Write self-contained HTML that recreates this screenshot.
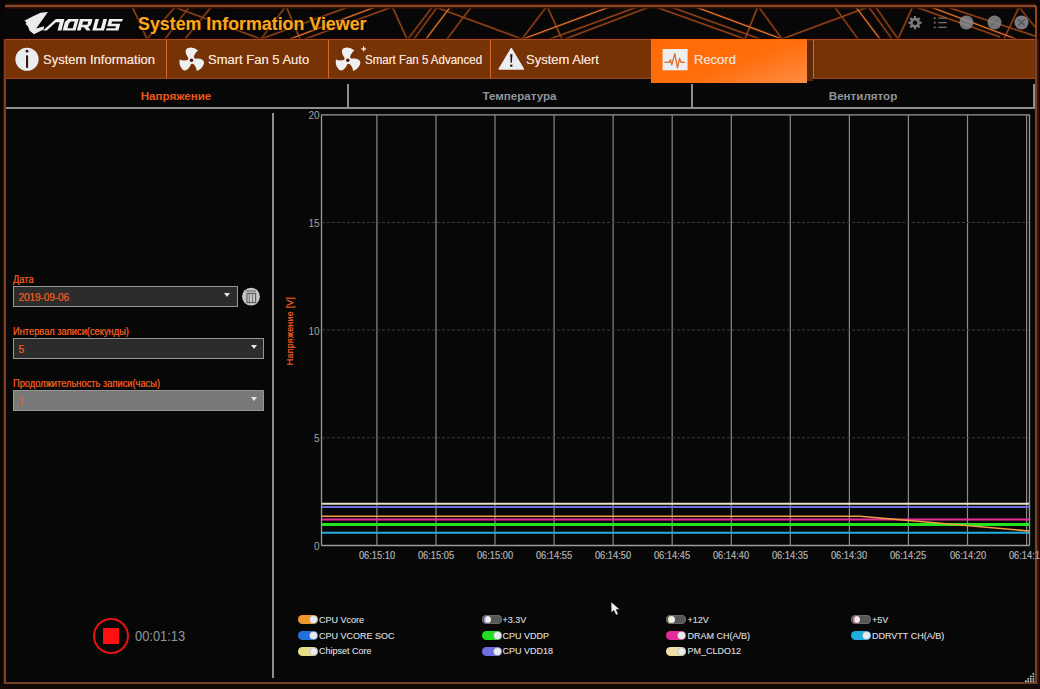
<!DOCTYPE html>
<html><head><meta charset="utf-8">
<style>
*{margin:0;padding:0;box-sizing:border-box}
html,body{width:1040px;height:689px;overflow:hidden;background:#070707;font-family:"Liberation Sans",sans-serif}
.a{position:absolute}
#frame{left:4px;top:5px;width:1034px;height:679px;border:2px solid #b8541e;}
.tab{position:absolute;top:40px;height:39px;color:#f1dccb;text-shadow:0 0 0.5px #f1dccb;font-size:13px;line-height:39px;white-space:nowrap}
.sep{position:absolute;top:40px;width:1px;height:38px;background:#d06a30}
.sub{position:absolute;top:84px;height:24px;line-height:24px;font-size:11.6px;font-weight:bold;text-align:center;color:#8f959a}
.lbl{position:absolute;left:13px;font-size:10px;color:#e4561c;white-space:nowrap;transform:scaleX(0.93);transform-origin:left;text-shadow:0 0 0.4px #e4561c}
.dd{position:absolute;left:13px;height:20.5px;border:1.8px solid #969696;background:#2c2c2c;color:#e4561c;font-size:10.2px;line-height:21px;padding-left:4.5px;letter-spacing:-0.15px;text-shadow:0 0 0.4px #e4561c}
.arr{position:absolute;top:6px;width:0;height:0;border-left:3px solid transparent;border-right:3px solid transparent;border-top:4px solid #e6e6e6}
.yl{position:absolute;font-size:10px;color:#a4a4a4;text-align:right;width:20px;margin-top:2px;margin-left:1.5px}
.xl{position:absolute;top:550px;text-shadow:0 0 0.5px #909090;font-size:10px;line-height:12px;color:#a0a0a0;width:60px;text-align:center;margin-left:-30px;transform:scaleX(0.93)}
.leg{position:absolute;font-size:9px;color:#c2c6ca;text-shadow:0 0 0.6px #a0a4a8;white-space:nowrap;line-height:12px;transform:scaleX(1.0);transform-origin:left}
.pill{position:absolute;width:20.2px;height:9.2px;border-radius:4.6px}
.knob{position:absolute;width:7px;height:7px;border-radius:50%;background:#e8eaee;top:1.1px;box-shadow:0 0 0 0.6px #b0b0b0}
</style></head>
<body>
<!-- outer dark surround -->
<div class="a" style="left:0;top:0;width:1040px;height:689px;background:#080605"></div>
<div class="a" style="left:5px;top:6px;width:1031px;height:677px;background:#070707"></div>

<!-- header lines -->
<svg class="a" style="left:0;top:0" width="1040" height="45" viewBox="0 0 1040 45">
 <g stroke="#8a3008" stroke-width="2.8" fill="none" opacity="0.4"><line x1="132" y1="6" x2="147" y2="39"/><line x1="176" y1="6" x2="147" y2="39"/><line x1="190" y1="6" x2="165" y2="39"/><line x1="212" y1="6" x2="185" y2="39"/><line x1="177" y1="8" x2="250" y2="35"/><line x1="250" y1="35" x2="261" y2="39"/><line x1="286" y1="6" x2="261" y2="39"/><line x1="286" y1="6" x2="300" y2="39"/><line x1="261" y1="39" x2="351" y2="6"/><line x1="290" y1="39" x2="378" y2="6"/><line x1="305" y1="39" x2="392" y2="7"/><line x1="392" y1="6" x2="407" y2="39"/><line x1="433" y1="6" x2="408" y2="39"/><line x1="438" y1="6" x2="414" y2="39"/><line x1="451" y1="6" x2="426" y2="39"/><line x1="472" y1="6" x2="447" y2="39"/><line x1="438" y1="8" x2="522" y2="39"/><line x1="547" y1="6" x2="522" y2="39"/><line x1="547" y1="6" x2="562" y2="39"/><line x1="523" y1="39" x2="612" y2="6"/><line x1="550" y1="39" x2="640" y2="6"/><line x1="565" y1="39" x2="652" y2="6"/><line x1="653" y1="6" x2="745" y2="39"/><line x1="668" y1="6" x2="760" y2="39"/><line x1="693" y1="6" x2="782" y2="39"/><line x1="758" y1="6" x2="745" y2="39"/><line x1="758" y1="6" x2="782" y2="39"/><line x1="782" y1="39" x2="868" y2="7"/><line x1="834" y1="6" x2="858" y2="39"/><line x1="855" y1="6" x2="880" y2="39"/><line x1="868" y1="6" x2="892" y2="39"/><line x1="875" y1="6" x2="898" y2="39"/><line x1="913" y1="6" x2="898" y2="39"/><line x1="913" y1="6" x2="1000" y2="37"/><line x1="928" y1="6" x2="1016" y2="39"/><line x1="950" y1="8" x2="1035" y2="36"/><line x1="1019" y1="7" x2="1004" y2="39"/><line x1="1019" y1="7" x2="1035" y2="27"/></g>
 <g stroke="#c8642a" stroke-width="1" fill="none" opacity="0.75"><line x1="132" y1="6" x2="147" y2="39"/><line x1="176" y1="6" x2="147" y2="39"/><line x1="190" y1="6" x2="165" y2="39"/><line x1="212" y1="6" x2="185" y2="39"/><line x1="177" y1="8" x2="250" y2="35"/><line x1="250" y1="35" x2="261" y2="39"/><line x1="286" y1="6" x2="261" y2="39"/><line x1="286" y1="6" x2="300" y2="39"/><line x1="261" y1="39" x2="351" y2="6"/><line x1="305" y1="39" x2="392" y2="7"/><line x1="392" y1="6" x2="407" y2="39"/><line x1="433" y1="6" x2="408" y2="39"/><line x1="438" y1="6" x2="414" y2="39"/><line x1="472" y1="6" x2="447" y2="39"/><line x1="438" y1="8" x2="522" y2="39"/><line x1="547" y1="6" x2="522" y2="39"/><line x1="547" y1="6" x2="562" y2="39"/><line x1="550" y1="39" x2="640" y2="6"/><line x1="565" y1="39" x2="652" y2="6"/><line x1="653" y1="6" x2="745" y2="39"/><line x1="668" y1="6" x2="760" y2="39"/><line x1="758" y1="6" x2="745" y2="39"/><line x1="758" y1="6" x2="782" y2="39"/><line x1="782" y1="39" x2="868" y2="7"/><line x1="834" y1="6" x2="858" y2="39"/><line x1="868" y1="6" x2="892" y2="39"/><line x1="875" y1="6" x2="898" y2="39"/><line x1="913" y1="6" x2="898" y2="39"/><line x1="913" y1="6" x2="1000" y2="37"/><line x1="950" y1="8" x2="1035" y2="36"/><line x1="1019" y1="7" x2="1004" y2="39"/><line x1="1019" y1="7" x2="1035" y2="27"/></g>
 <g stroke="#f08038" stroke-width="1.2" fill="none" opacity="0.95"><line x1="290" y1="39" x2="378" y2="6"/><line x1="451" y1="6" x2="426" y2="39"/><line x1="523" y1="39" x2="612" y2="6"/><line x1="693" y1="6" x2="782" y2="39"/><line x1="855" y1="6" x2="880" y2="39"/><line x1="928" y1="6" x2="1016" y2="39"/></g>
 <line x1="5" y1="6" x2="1036" y2="6" stroke="#3a1204" stroke-width="5"/><line x1="5" y1="6" x2="1036" y2="6" stroke="#84482a" stroke-width="2"/>
 <line x1="1036" y1="6" x2="1036" y2="39" stroke="#c8591d" stroke-width="1.5"/>
</svg>
<!-- logo black background -->
<div class="a" style="left:6px;top:8.5px;width:124px;height:30px;background:#070707"></div>

<!-- AORUS logo -->
<svg class="a" style="left:0;top:0" width="130" height="40" viewBox="0 0 130 40">
 <path d="M47.9,12.1 L40.5,12.7 L31.5,17 L24.3,20.7 L26.4,22.2 L25.6,24 L28.2,26.8 L29.4,30.4 L33.9,34.3 L43.6,29.6 L44.2,26.3 L36.2,28.4 Z" fill="#ececec"/>
 <g fill="#f0f0f0" fill-rule="evenodd" transform="translate(0,30.6) skewX(-15) translate(0,-30.6)">
  <path d="M43,30.6 L46.8,30.6 L53.6,22.2 L57.5,22.2 L57.5,30.6 L61.4,30.6 L61.4,19.1 L52.8,19.1 Z"/>
  <path d="M62.6,30.6 L75.6,30.6 L75.6,19.1 L65.2,19.1 L62.6,22 Z M66.9,28.3 L72.2,28.3 L72.2,21.5 L68.4,21.5 L66.9,23.2 Z"/>
  <path d="M76.9,30.6 L80.6,30.6 L80.6,27.2 L83,27.2 L86.6,30.6 L90.6,30.6 L87.2,27 Q89.4,26.2 89.4,24 L89.4,19.1 L76.9,19.1 Z M80.6,21.5 L85.8,21.5 L85.8,24.8 L80.6,24.8 Z"/>
  <path d="M92.3,19.1 L92.3,30.6 L104,30.6 L104,19.1 L100.3,19.1 L100.3,28.3 L95.9,28.3 L95.9,19.1 Z"/>
  <path d="M106,19.1 L120,19.1 L119.4,21.5 L109.6,21.5 L109.6,23.8 L118.4,23.8 L118.4,30.6 L105.8,30.6 L106.2,28.3 L114.8,28.3 L114.8,26.2 L106,26.2 Z"/>
 </g>
</svg>
<!-- title -->
<div class="a" style="left:138px;top:14px;font-size:18.3px;line-height:20px;font-weight:bold;color:#f7a81a;white-space:nowrap;transform:scaleX(0.975);transform-origin:left;text-shadow:0 0 1px #6a2000,0 0 2px #000,0 0 3px #000">System Information Viewer</div>

<!-- header icons -->
<svg class="a" style="left:900px;top:8px" width="135" height="30" viewBox="900 8 135 30">
 <g fill="#7c7c7c">
  <circle cx="915" cy="22.7" r="4.9"/>
  <g stroke="#7c7c7c" stroke-width="2.2">
   <line x1="915" y1="16" x2="915" y2="29.4"/>
   <line x1="908.3" y1="22.7" x2="921.7" y2="22.7"/>
   <line x1="910.3" y1="18" x2="919.7" y2="27.4"/>
   <line x1="919.7" y1="18" x2="910.3" y2="27.4"/>
  </g>
  <circle cx="915" cy="22.7" r="2.3" fill="#070707"/>
 </g>
 <g fill="#6e6e6e">
  <rect x="933.8" y="17.3" width="1.8" height="1.8"/>
  <rect x="933.8" y="21.8" width="1.8" height="1.8"/>
  <rect x="933.8" y="26.5" width="1.8" height="1.8"/>
  <rect x="938.3" y="17.5" width="8.4" height="1.3"/>
  <rect x="938.3" y="22" width="8.4" height="1.3"/>
  <rect x="938.3" y="26.7" width="8.4" height="1.3"/>
 </g>
 <circle cx="966.4" cy="22.5" r="7" fill="#8e9196" fill-opacity="0.8"/>
 <circle cx="994.5" cy="22.5" r="7" fill="#8e9196" fill-opacity="0.8"/>
 <line x1="990.5" y1="26.5" x2="998.5" y2="18.5" stroke="#5a6a60" stroke-width="1"/>
 <circle cx="1021.5" cy="22.5" r="7" fill="#8e9196" fill-opacity="0.85"/>
 <g stroke="#4a4d50" stroke-width="1.2"><line x1="1018.3" y1="19.3" x2="1024.7" y2="25.7"/><line x1="1024.7" y1="19.3" x2="1018.3" y2="25.7"/></g>
</svg>
<!-- tab bar -->
<div class="a" style="left:5px;top:39px;width:1031px;height:40px;background:#773206;border-top:1.5px solid #a84c22;border-bottom:1.5px solid #9c4420;box-shadow:0 -1.5px 1.5px #2a0600"></div>
<div class="sep" style="left:166px"></div>
<div class="sep" style="left:328px"></div>
<div class="sep" style="left:490px"></div>
<div class="sep" style="left:813px"></div>

<!-- tab icons -->
<svg class="a" style="left:0;top:39px" width="660" height="40" viewBox="0 39 660 40">
 <circle cx="27" cy="59.25" r="11.6" fill="#eaeef2"/>
 <circle cx="27" cy="51.2" r="1.4" fill="#3a1408"/>
 <rect x="26" y="55.3" width="2.1" height="12.8" rx="0.8" fill="#3a1408"/>
 <g transform="translate(191.5,60.3)" fill="#eef0f2">
  <path d="M2.2,-2.8 Q2.8,-7 6.6,-9.9 Q2,-13.8 -3.5,-12.4 Q-6.8,-11 -5.6,-6.8 Q-4.6,-3.8 -2.6,-1.6 Z"/><g transform="rotate(120)"><path d="M2.2,-2.8 Q2.8,-7 6.6,-9.9 Q2,-13.8 -3.5,-12.4 Q-6.8,-11 -5.6,-6.8 Q-4.6,-3.8 -2.6,-1.6 Z"/></g><g transform="rotate(240)"><path d="M2.2,-2.8 Q2.8,-7 6.6,-9.9 Q2,-13.8 -3.5,-12.4 Q-6.8,-11 -5.6,-6.8 Q-4.6,-3.8 -2.6,-1.6 Z"/></g>
  <circle r="3.6"/><circle r="1.7" fill="#4a1606"/>
 </g><g transform="translate(347.8,60.3)" fill="#eef0f2">
  <path d="M2.2,-2.8 Q2.8,-7 6.6,-9.9 Q2,-13.8 -3.5,-12.4 Q-6.8,-11 -5.6,-6.8 Q-4.6,-3.8 -2.6,-1.6 Z"/><g transform="rotate(120)"><path d="M2.2,-2.8 Q2.8,-7 6.6,-9.9 Q2,-13.8 -3.5,-12.4 Q-6.8,-11 -5.6,-6.8 Q-4.6,-3.8 -2.6,-1.6 Z"/></g><g transform="rotate(240)"><path d="M2.2,-2.8 Q2.8,-7 6.6,-9.9 Q2,-13.8 -3.5,-12.4 Q-6.8,-11 -5.6,-6.8 Q-4.6,-3.8 -2.6,-1.6 Z"/></g>
  <circle r="3.6"/><circle r="1.7" fill="#4a1606"/>
 </g>
 <g fill="#f2f2f2"><rect x="363" y="46.5" width="1.3" height="4.8"/><rect x="361.3" y="48.3" width="4.8" height="1.3"/></g>
 <path d="M511.3 48.6 L523.5 69 L499.1 69 Z" fill="#eaeef2" stroke="#eaeef2" stroke-width="1.4" stroke-linejoin="round"/>
 <path d="M510.2 54.2 L512.4 54.2 L511.9 62.7 L510.7 62.7 Z" fill="#2a0e06"/>
 <rect x="510.2" y="64.6" width="2.2" height="2.1" fill="#2a0e06"/>
</svg>
<div class="tab" style="left:43px">System Information</div>
<div class="tab" style="left:208px">Smart Fan 5 Auto</div>
<div class="tab" style="left:365px;transform:scaleX(0.885);transform-origin:left">Smart Fan 5 Advanced</div>
<div class="tab" style="left:526px">System Alert</div>

<!-- active Record tab -->
<div class="a" style="left:806px;top:41px;width:7px;height:40px;background:#5e2a0c"></div>
<div class="a" style="left:651px;top:39px;width:156px;height:44px;background:linear-gradient(160deg,#ff6a08 0%,#ff6e0c 55%,#ff8c45 100%)"></div>
<svg class="a" style="left:662px;top:49px" width="27" height="22" viewBox="0 0 27 22">
 <rect x="0.6" y="0" width="25" height="21.3" fill="#eceef0"/>
 <path d="M2.3 13.3 L7 13.3 L8.5 10.8 L9.8 15.8 L12.8 4.6 L15.5 18.9 L17.5 9.5 L19 13.3 L22.9 13.3" stroke="#e2682a" stroke-width="1.3" fill="none" stroke-linejoin="round"/>
</svg>
<div class="tab" style="left:694px">Record</div>

<!-- subtabs -->
<div class="a" style="left:5px;top:107px;width:1030px;height:1.5px;background:#8e8e8e"></div>
<div class="a" style="left:347px;top:84px;width:1.5px;height:24px;background:#8e8e8e"></div>
<div class="a" style="left:691px;top:84px;width:1.5px;height:24px;background:#8e8e8e"></div>
<div class="a" style="left:1033px;top:84px;width:1.5px;height:24px;background:#8e8e8e"></div>
<div class="sub" style="left:5px;width:342px;color:#e8571b">Напряжение</div>
<div class="sub" style="left:348px;width:343px">Температура</div>
<div class="sub" style="left:692px;width:342px">Вентилятор</div>

<!-- left panel divider -->
<div class="a" style="left:272px;top:113px;width:1.5px;height:565px;background:#8e8e8e"></div>


<!-- frame borders -->
<div class="a" style="left:2.5px;top:39px;width:1.5px;height:645px;background:#3a1206"></div><div class="a" style="left:4px;top:39px;width:2px;height:645px;background:#7e3e22"></div>
<div class="a" style="left:1035px;top:39px;width:1.6px;height:645px;background:#6e4630"></div><div class="a" style="left:1036.6px;top:39px;width:2px;height:645px;background:#3e1206"></div>
<div class="a" style="left:0;top:684px;width:1040px;height:5px;background:#120a04"></div><div class="a" style="left:4px;top:682px;width:1033px;height:2.3px;background:#704228"></div>

<!-- left panel controls -->
<div class="lbl" style="top:274px">Дата</div>
<div class="dd" style="top:286px;width:225px">2019-09-06<div class="arr" style="left:210px"></div></div>
<svg class="a" style="left:241px;top:286px" width="21" height="21" viewBox="241 286 21 21">
 <circle cx="251" cy="296.6" r="8.9" fill="#c6c6c6"/>
 <rect x="245.8" y="290.3" width="10.2" height="1.3" fill="#7a7a7a"/>
 <rect x="246.9" y="293.4" width="8.7" height="9.2" fill="none" stroke="#5a5a5a" stroke-width="1.1"/>
 <rect x="248.8" y="294" width="0.9" height="8" fill="#6a6a6a"/>
 <rect x="252" y="294" width="0.9" height="8" fill="#6a6a6a"/>
</svg>
<div class="lbl" style="top:326px">Интервал записи(секунды)</div>
<div class="dd" style="top:338px;width:251px">5<div class="arr" style="left:237px"></div></div>
<div class="lbl" style="top:378px">Продолжительность записи(часы)</div>
<div class="dd" style="top:390px;width:251px;background:#787878;color:#d06a40">1<div class="arr" style="left:237px"></div></div>

<!-- stop button -->
<div class="a" style="left:92.5px;top:617.5px;width:36px;height:36px;border:2px solid #e41414;border-radius:50%"></div>
<div class="a" style="left:102.5px;top:627.5px;width:16px;height:16px;background:#ff1010"></div>
<div class="a" style="left:135px;top:626.5px;font-size:14px;line-height:18px;color:#8e979c;transform:scaleX(0.92);transform-origin:left">00:01:13</div>

<!-- chart -->
<svg class="a" style="left:0;top:0" width="1040" height="689" viewBox="0 0 1040 689">
 <g stroke="#9a9a9a" stroke-width="1.3">
  <line x1="321.5" y1="114.8" x2="1029.5" y2="114.8"/>
  <line x1="321.5" y1="114.8" x2="321.5" y2="545.5"/>
  <line x1="321.5" y1="545.5" x2="1029.5" y2="545.5"/>
  <line x1="1029.5" y1="114.8" x2="1029.5" y2="545.5"/>
 </g>
 <g stroke="#8a8a8a" stroke-width="1.2"><line x1="376.9" y1="115" x2="376.9" y2="545"/><line x1="436.0" y1="115" x2="436.0" y2="545"/><line x1="495.0" y1="115" x2="495.0" y2="545"/><line x1="554.1" y1="115" x2="554.1" y2="545"/><line x1="613.1" y1="115" x2="613.1" y2="545"/><line x1="672.2" y1="115" x2="672.2" y2="545"/><line x1="731.3" y1="115" x2="731.3" y2="545"/><line x1="790.3" y1="115" x2="790.3" y2="545"/><line x1="849.4" y1="115" x2="849.4" y2="545"/><line x1="908.4" y1="115" x2="908.4" y2="545"/><line x1="967.5" y1="115" x2="967.5" y2="545"/><line x1="1026.6" y1="115" x2="1026.6" y2="545"/></g>
 <g stroke="#3c3c3c" stroke-width="1" stroke-dasharray="3 2">
  <line x1="322" y1="222.5" x2="1029" y2="222.5"/>
  <line x1="322" y1="330" x2="1029" y2="330"/>
  <line x1="322" y1="437.8" x2="1029" y2="437.8"/>
 </g>
 <!-- data lines -->
 <g fill="none">
  <line x1="322" y1="503.8" x2="1029" y2="503.8" stroke="#e8e0c8" stroke-width="2"/>
  <line x1="322" y1="507" x2="1029" y2="507" stroke="#6c6cd8" stroke-width="2"/>
  <line x1="322" y1="519.4" x2="1029" y2="519.4" stroke="#e8309a" stroke-width="2"/>
  <line x1="322" y1="524.6" x2="1029" y2="524.6" stroke="#22e622" stroke-width="3"/>
  <line x1="322" y1="532.7" x2="1029" y2="532.7" stroke="#22b0e0" stroke-width="2"/>
  <polyline points="322,516.2 860,516.2 1029,531" stroke="#f0a040" stroke-width="1.6"/>
 </g>
</svg>
<div class="yl" style="left:298px;top:108px">20</div>
<div class="yl" style="left:298px;top:216px">15</div>
<div class="yl" style="left:298px;top:324px">10</div>
<div class="yl" style="left:298px;top:431px">5</div>
<div class="yl" style="left:298px;top:539px">0</div>
<div class="a" style="left:290px;top:330.5px;width:0;height:0"><div style="position:absolute;transform:translate(-50%,-50%) rotate(-90deg);font-size:9px;color:#e4561c;white-space:nowrap;text-shadow:0 0 0.5px #e4561c;letter-spacing:0.2px">Напряжение [V]</div></div>
<div class="xl" style="left:376.9px">06:15:10</div><div class="xl" style="left:436.0px">06:15:05</div><div class="xl" style="left:495.0px">06:15:00</div><div class="xl" style="left:554.1px">06:14:55</div><div class="xl" style="left:613.1px">06:14:50</div><div class="xl" style="left:672.2px">06:14:45</div><div class="xl" style="left:731.3px">06:14:40</div><div class="xl" style="left:790.3px">06:14:35</div><div class="xl" style="left:849.4px">06:14:30</div><div class="xl" style="left:908.4px">06:14:25</div><div class="xl" style="left:967.5px">06:14:20</div><div class="xl" style="left:1026.6px">06:14:15</div>

<!-- legend -->
<div class="pill" style="left:297.7px;top:615.3px;background:#f0962a"><div class="knob" style="left:12px"></div></div><div class="leg" style="left:319px;top:613.5px">CPU Vcore</div><div class="pill" style="left:297.7px;top:631.3px;background:#2270dc"><div class="knob" style="left:12px"></div></div><div class="leg" style="left:319px;top:629.5px">CPU VCORE SOC</div><div class="pill" style="left:297.7px;top:646.8px;background:#e6df88"><div class="knob" style="left:12px"></div></div><div class="leg" style="left:319px;top:645.0px">Chipset Core</div><div class="pill" style="left:482.2px;top:615.3px;background:#585858;box-shadow:inset 0 0 0 0.8px #6c6c6c"><div class="knob" style="left:2px;background:#eee;box-shadow:inset 1.2px 0 0 0 #9a88d8"></div></div><div class="leg" style="left:502.5px;top:613.5px">+3.3V</div><div class="pill" style="left:482.2px;top:631.3px;background:#22dd22"><div class="knob" style="left:12px"></div></div><div class="leg" style="left:502.5px;top:629.5px">CPU VDDP</div><div class="pill" style="left:482.2px;top:646.8px;background:#6e6ee0"><div class="knob" style="left:12px"></div></div><div class="leg" style="left:502.5px;top:645.0px">CPU VDD18</div><div class="pill" style="left:666.2px;top:615.3px;background:#585858;box-shadow:inset 0 0 0 0.8px #6c6c6c"><div class="knob" style="left:2px;background:#eee;box-shadow:inset 1.2px 0 0 0 #e6df88"></div></div><div class="leg" style="left:687.4px;top:613.5px">+12V</div><div class="pill" style="left:666.2px;top:631.3px;background:#e42c9c"><div class="knob" style="left:12px"></div></div><div class="leg" style="left:687.4px;top:629.5px">DRAM CH(A/B)</div><div class="pill" style="left:666.2px;top:646.8px;background:#efdfa8"><div class="knob" style="left:12px"></div></div><div class="leg" style="left:687.4px;top:645.0px">PM_CLDO12</div><div class="pill" style="left:850.7px;top:615.3px;background:#585858;box-shadow:inset 0 0 0 0.8px #6c6c6c"><div class="knob" style="left:2px;background:#eee;box-shadow:inset 1.2px 0 0 0 #e0508a"></div></div><div class="leg" style="left:872px;top:613.5px">+5V</div><div class="pill" style="left:850.7px;top:631.3px;background:#1eaee0"><div class="knob" style="left:12px"></div></div><div class="leg" style="left:872px;top:629.5px">DDRVTT CH(A/B)</div>

<!-- cursor -->
<svg class="a" style="left:600px;top:592px" width="30" height="30" viewBox="600 592 30 30">
 <path d="M611.3,602.2 L611.5,612.2 L613.9,609.9 L616.1,614.8 L617.9,614 L615.8,609.3 L619.3,609.3 Z" fill="#f0f0f0"/>
</svg>
<!-- resize grip -->
<svg class="a" style="left:1020px;top:668px" width="20" height="18" viewBox="1020 668 20 18">
 <g fill="#d0d0d8"><rect x="1032.6" y="673.0" width="1.6" height="1.6"/><rect x="1032.6" y="675.6" width="1.6" height="1.6"/><rect x="1030.0" y="675.6" width="1.6" height="1.6"/><rect x="1032.6" y="678.1" width="1.6" height="1.6"/><rect x="1030.0" y="678.1" width="1.6" height="1.6"/><rect x="1027.4" y="678.1" width="1.6" height="1.6"/><rect x="1032.6" y="680.4" width="1.6" height="1.6"/><rect x="1030.0" y="680.4" width="1.6" height="1.6"/><rect x="1027.4" y="680.4" width="1.6" height="1.6"/><rect x="1025.0" y="680.4" width="1.6" height="1.6"/></g>
</svg>

</body></html>
